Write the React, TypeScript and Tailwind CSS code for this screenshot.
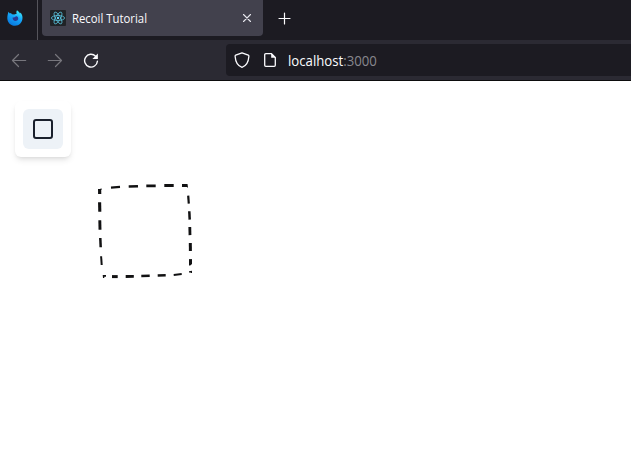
type Dash = [number, number, number, number, number];

// x1, y1, x2, y2, thickness
const dashes: Dash[] = [
  [99.6, 189, 99.7, 194, 3.2],
  [111, 187.6, 120, 186.9, 2.1],
  [128.7, 186.5, 138, 186.2, 2.6],
  [146.3, 185.9, 155.7, 185.8, 2.8],
  [164.3, 185.5, 173.7, 185.5, 3],
  [182, 185.4, 187.2, 185.5, 3],
  [99.6, 202.3, 99.8, 211.7, 3.1],
  [99.8, 220.2, 100, 229.8, 2.9],
  [100.3, 238, 100.7, 247.2, 2.5],
  [101.1, 256.2, 101.7, 265, 2],
  [112, 276.6, 117.7, 276.6, 3],
  [125.7, 276.5, 133.8, 276.4, 2.9],
  [141.3, 276, 149.7, 275.8, 2.6],
  [157.7, 275.5, 165.7, 275.2, 2.4],
  [173.7, 274.9, 181.7, 274.1, 2],
  [188.2, 195.7, 188.8, 203.7, 2.2],
  [189.3, 211.3, 189.7, 219.6, 2.5],
  [189.8, 227, 190, 235.1, 2.8],
  [190.3, 243.1, 190.4, 251, 3],
  [190.5, 259.1, 190.5, 263.6, 3],
];

function Firefox() {
  return (
    <svg className="h-4 w-4" viewBox="0 0 16 16">
      <defs>
        <linearGradient id="fox" x1="0.8" y1="0" x2="0.3" y2="1">
          <stop offset="0" stopColor="#43eff8" />
          <stop offset="0.45" stopColor="#15a8fb" />
          <stop offset="1" stopColor="#0876dc" />
        </linearGradient>
      </defs>
      <path fill="url(#fox)" d="M10 0.2C11.3 1 12.4 2 13 3.5c.4-.1.5-.6.5-1 1.3 1.4 2 3.300 2 5.300C15.500 12.400 12.200 15.800 8 15.800S.3 12.500.3 8.200c0-2.200.6-4.500 1.200-6.400L2.800 3.400 4 2.900l.8 1.300 2.400.3C7.800 3.900 8.900 3.800 9.600 4 9.200 2.500 9.400.9 10 .2Z" />
      <path fill="#2b3a94" d="M5.800 7.200c.8.3 1.500.3 2.200-.1.300-.5.900-.8 1.700-.8 1.300.7 1.800 1.900 1.400 3-.5 1.300-1.800 1.900-3.100 1.600C6.200 10.500 5.200 8.900 5.800 7.200Z" />
    </svg>
  );
}

function ReactIcon() {
  return (
    <svg className="h-4 w-4" viewBox="0 0 16 16" fill="none" stroke="#58bfd9" strokeWidth="0.8">
      <rect width="16" height="16" rx="1" fill="#202326" stroke="none" />
      <ellipse cx="8" cy="8" rx="6.600" ry="2.500" />
      <ellipse cx="8" cy="8" rx="6.600" ry="2.500" transform="rotate(60 8 8)" />
      <ellipse cx="8" cy="8" rx="6.600" ry="2.500" transform="rotate(120 8 8)" />
      <circle cx="8" cy="8" r="1.200" fill="#61dafb" stroke="none" />
    </svg>
  );
}

function Arrow({ flip = false }: { flip?: boolean }) {
  return (
    <svg className={flip ? "h-4 w-4 -scale-x-100" : "h-4 w-4"} viewBox="0 0 16 16" fill="none" stroke="#77767d" strokeWidth="1.200" strokeLinecap="round" strokeLinejoin="round">
      <path d="M7.500 2.500 1.500 8.500l6 6M1.500 8.500h13.200" />
    </svg>
  );
}

export default function App() {
  return (
    <div className="relative flex h-[475px] w-[631px] flex-col overflow-hidden bg-white font-['Open_Sans','Noto_Sans',sans-serif]">
      <div className="flex h-10 shrink-0 bg-[#1c1b22]">
        <div className="flex w-[38px] border-r border-[#55545b] pt-[10px] pl-[7px]">
          <Firefox />
        </div>
        <div className="ml-1 flex h-9 w-[221px] items-center rounded-b bg-[#42414d] pr-[11px] pl-2">
          <ReactIcon />
          <span className="ml-1.5 flex-1 pt-0.5 text-xs whitespace-nowrap text-[#fbfbfe]">
            <span className="inline-block origin-left scale-x-[0.945]">Recoil Tutorial</span>
          </span>
          <svg className="h-[10px] w-[10px]" viewBox="0 0 10 10" stroke="#e7e7ee" strokeWidth="1.100" strokeLinecap="round">
            <path d="m1.500 1.500 7 7m0-7-7 7" />
          </svg>
        </div>
        <svg className="mt-3 ml-[15px] h-[13px] w-[13px]" viewBox="0 0 13 13" stroke="#fbfbfe" strokeWidth="1.200" strokeLinecap="round">
          <path d="M1 6.500h11M6.500 1v11" />
        </svg>
      </div>
      <div className="flex h-[41px] shrink-0 items-center border-b border-[#0c0c0d] bg-[#2b2a33]">
        <div className="flex w-[226px] items-center gap-5 pl-[11px]">
          <Arrow />
          <Arrow flip />
          <svg className="h-4 w-4" viewBox="0 0 16 16" fill="none" stroke="#fbfbfe" strokeWidth="1.400" strokeLinecap="round">
            <path d="M12.600 4.200A6.400 6.400 0 1 0 14.400 9.200" />
            <path d="M14.900 1.500v5.500H9.400Z" fill="#fbfbfe" stroke="none" />
          </svg>
        </div>
        <div className="flex h-8 flex-1 items-center rounded-l bg-[#1c1b22] pl-2">
          <svg className="h-4 w-4" viewBox="0 0 16 16" fill="none" stroke="#fbfbfe" strokeWidth="1.300" strokeLinejoin="round">
            <path d="M8 .8 14.300 3.200Q15 3.500 14.900 4.300C14.500 9.800 12.500 14 8 15.300 3.500 14 1.500 9.800 1.100 4.300Q1 3.500 1.700 3.200Z" />
          </svg>
          <svg className="ml-3 h-4 w-4" viewBox="0 0 16 16" fill="none" stroke="#fbfbfe" strokeWidth="1.300" strokeLinejoin="round">
            <path d="M3.800 1.700H9.500L13.300 5.500V13.200Q13.300 14.300 12.200 14.300H3.800Q2.700 14.300 2.700 13.200V2.800Q2.700 1.700 3.800 1.700Z" />
            <path d="M9.200 1.200v4.600h4.600Z" fill="#fbfbfe" stroke="none" />
          </svg>
          <span className="ml-2.5 pt-0.5 text-sm whitespace-nowrap text-[#fbfbfe]">
            <span className="inline-block origin-left scale-x-[0.942]">localhost<span className="text-[#88878e]">:3000</span></span>
          </span>
        </div>
      </div>
      <main className="flex-1 pt-5 pl-[15px]">
        <div className="flex h-14 w-14 items-center justify-center rounded-md bg-white shadow-md">
          <button className="flex h-10 w-10 items-center justify-center rounded-md bg-[#edf2f7]">
            <span className="h-5 w-5 rounded-[3px] border-2 border-[#1a202c]" />
          </button>
        </div>
      </main>
      <svg className="absolute top-[180px] left-[95px] h-[102px] w-[102px]" viewBox="95 180 102 102" stroke="#111112">
        {dashes.map(([x1, y1, x2, y2, w], i) => (
          <line key={i} x1={x1} y1={y1} x2={x2} y2={y2} strokeWidth={w} />
        ))}
        <g fill="#111112" stroke="none">
          <path d="M98 189h2l1.500-.8v1.800h-3.500Z" />
          <path d="M185.500 184h1.900l.6 3.500h-.8Z" />
          <path d="M102.700 275h3.300v1.700h-1.700v1.300h-1.300Z" />
          <path d="M189 263h3v1l-1.800 1.600h-1.200Z" />
          <path d="M189 271.300l3-.6v2.400h-1.300v-.7h-1.700Z" />
        </g>
      </svg>
    </div>
  );
}
